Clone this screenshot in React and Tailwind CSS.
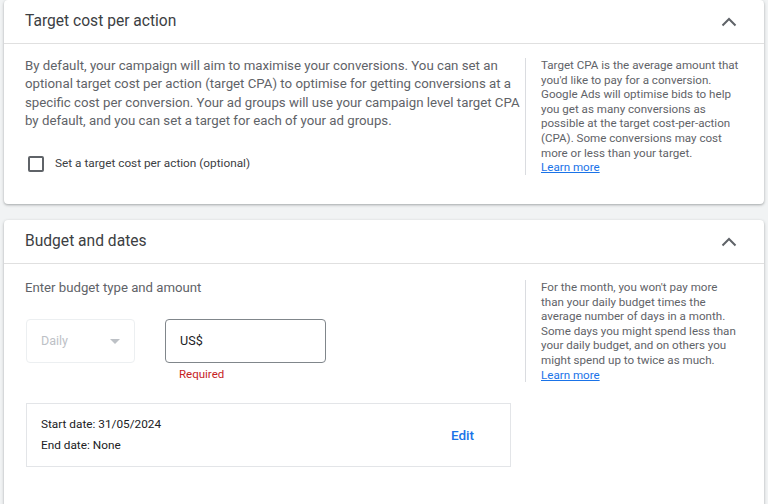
import React from 'react';

const ChevronUp = () => (
  <svg width="16" height="10" viewBox="0 0 16 10" className="text-[#5f6368]">
    <path d="M1.5 8.5 L8 2 L14.5 8.5" fill="none" stroke="currentColor" strokeWidth="2" />
  </svg>
);

const Card = ({ title, children, className = '' }) => (
  <div className={`bg-white rounded-[4px] shadow-[0_1px_3px_rgba(60,64,67,0.3),0_1px_2px_rgba(60,64,67,0.15)] ${className}`}>
    <div className="h-[44px] flex items-center justify-between pl-[21px] pr-[27px] border-b border-[#e0e0e0]">
      <h2 className="text-[15.6px] text-[#3c4043]">{title}</h2>
      <ChevronUp />
    </div>
    {children}
  </div>
);

const SideNote = ({ children }) => (
  <div className="border-l border-[#dadce0] pl-[15px] w-[215px] text-[11.6px] leading-[14.6px] text-[#5f6368]">
    {children}
    <br />
    <a href="#" className="text-[#1a73e8] underline">Learn more</a>
  </div>
);

export default function App() {
  return (
    <div className="min-h-[504px] bg-[#f1f3f4] px-[4px] pb-4 font-['Roboto','Liberation_Sans',sans-serif] overflow-hidden">
      {/* Docelowy CPA */}
      <Card title="Target cost per action" className="h-[204px]">
        <div className="flex pl-[21px] pt-[13px]">
          <div className="w-[500px] pr-[4px]">
            <p className="text-[13.25px] leading-[18.3px] text-[#5f6368]">
              By default, your campaign will aim to maximise your conversions. You can set an optional target cost per action (target CPA) to optimise for getting conversions at a specific cost per conversion. Your ad groups will use your campaign level target CPA by default, and you can set a target for each of your ad groups.
            </p>
            <label className="mt-[25px] flex items-center gap-[11px] pl-[3px]">
              <span className="w-[16px] h-[16px] border-2 border-[#5f6368] rounded-[2px]"></span>
              <span className="text-[11.8px] text-[#3c4043]">Set a target cost per action (optional)</span>
            </label>
          </div>
          <div className="pt-[1px]">
            <SideNote>
              Target CPA is the average amount that you'd like to pay for a conversion. Google Ads will optimise bids to help you get as many conversions as possible at the target cost-per-action (CPA). Some conversions may cost more or less than your target.
            </SideNote>
          </div>
        </div>
      </Card>

      {/* Budżet i daty */}
      <Card title="Budget and dates" className="mt-[16px] h-[300px]">
        <div className="flex pl-[21px] pt-[15px]">
          <div className="w-[500px] pr-[4px]">
            <p className="text-[13.2px] leading-[18px] text-[#5f6368]">Enter budget type and amount</p>
            <div className="mt-[22px] flex gap-[30px] pl-[1px]">
              <div className="w-[109px] h-[44px] border border-[#eceff1] rounded-[4px] flex items-center justify-between pl-[14px] pr-[14px]">
                <span className="text-[12.5px] text-[#bdc1c6]">Daily</span>
                <svg width="10" height="5" viewBox="0 0 10 5"><path d="M0 0 L10 0 L5 5 Z" fill="#bdc1c6" /></svg>
              </div>
              <div>
                <div className="w-[161px] h-[44px] border border-[#80868b] rounded-[4px] flex items-center pl-[14px]">
                  <span className="text-[12.6px] text-[#202124]">US$</span>
                </div>
                <p className="mt-[3px] pl-[14px] text-[11.5px] text-[#c5221f]">Required</p>
              </div>
            </div>
            <div className="mt-[20px] ml-[1px] w-[485px] h-[64px] border border-[#e3e5e8] flex items-center justify-between pl-[14px] pr-[36px]">
              <div className="text-[11.8px] leading-[21px] text-[#202124]">
                <p>Start date: 31/05/2024</p>
                <p>End date: None</p>
              </div>
              <button className="text-[13.5px] font-medium text-[#1a73e8]">Edit</button>
            </div>
          </div>
          <div className="pt-[1px]">
            <SideNote>
              For the month, you won't pay more than your daily budget times the average number of days in a month. Some days you might spend less than your daily budget, and on others you might spend up to twice as much.
            </SideNote>
          </div>
        </div>
      </Card>
    </div>
  );
}
